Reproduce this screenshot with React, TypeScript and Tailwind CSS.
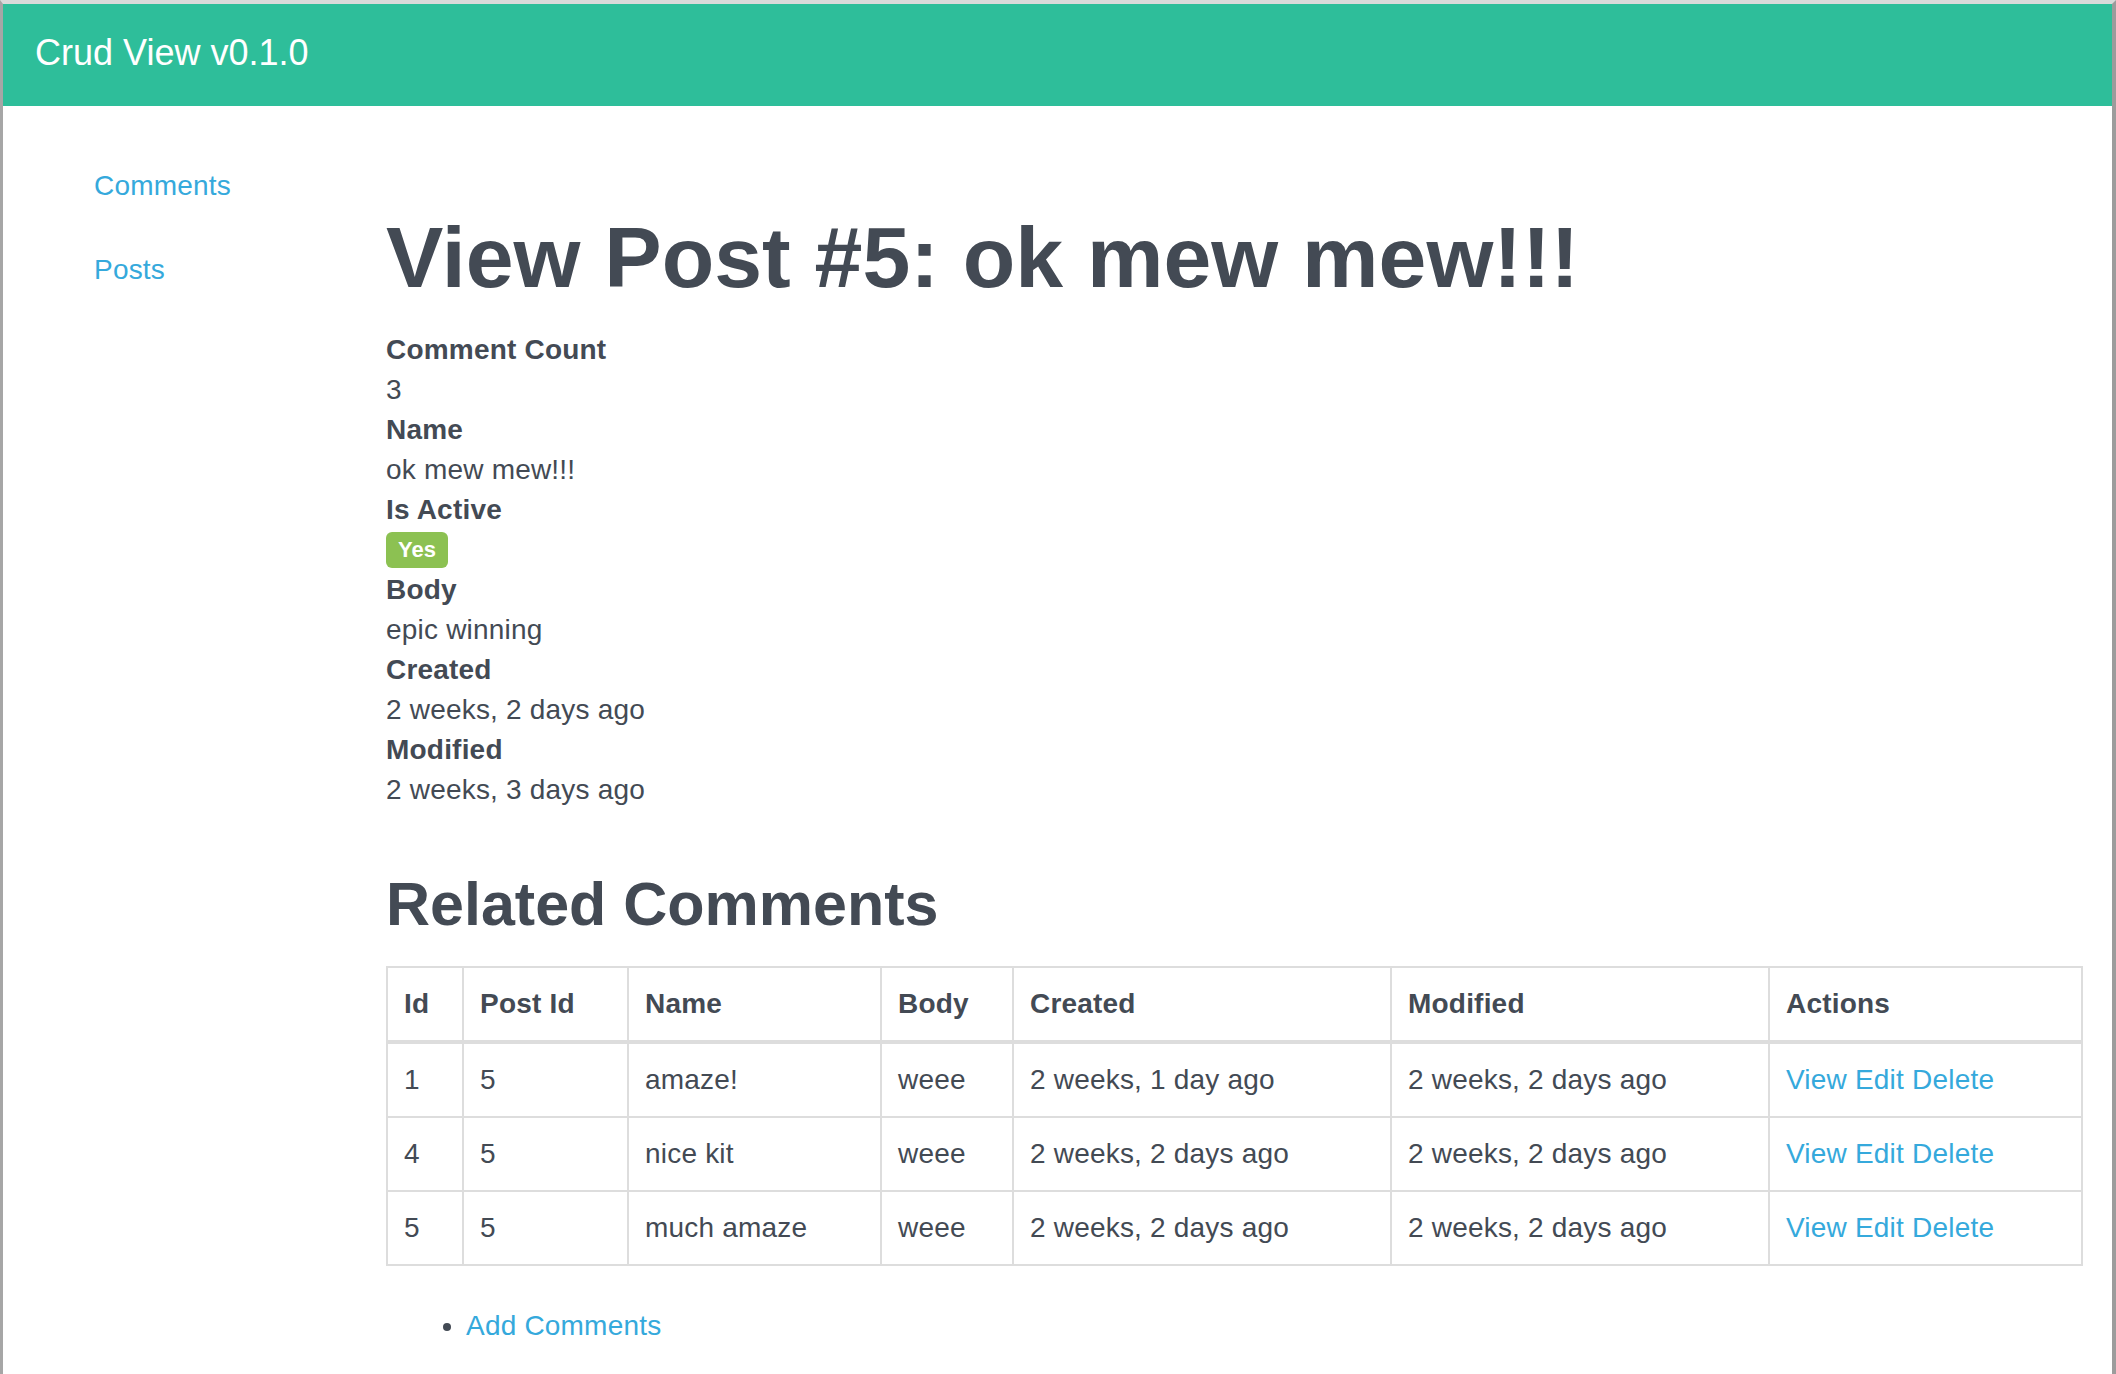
type Comment = {
  id: number;
  postId: number;
  name: string;
  body: string;
  created: string;
  modified: string;
};

const comments: Comment[] = [
  { id: 1, postId: 5, name: "amaze!", body: "weee", created: "2 weeks, 1 day ago", modified: "2 weeks, 2 days ago" },
  { id: 4, postId: 5, name: "nice kit", body: "weee", created: "2 weeks, 2 days ago", modified: "2 weeks, 2 days ago" },
  { id: 5, postId: 5, name: "much amaze", body: "weee", created: "2 weeks, 2 days ago", modified: "2 weeks, 2 days ago" },
];

const columns = ["Id", "Post Id", "Name", "Body", "Created", "Modified", "Actions"];

const Field = ({ label, children }: { label: string; children: React.ReactNode }) => (
  <>
    <dt className="font-bold leading-[40px]">{label}</dt>
    <dd className="leading-[40px]">{children}</dd>
  </>
);

const App = () => {
  return (
    <div
      className="h-[1374px] overflow-hidden bg-white border-l-[3px] border-r-[4px] border-t-[4px] border-l-[#a6a6a6] border-r-[#9c9c9c] border-t-[#dadada] text-[#434a54] text-[28px] tracking-[0.2px]"
      style={{ fontFamily: '"Liberation Sans", Arial, Helvetica, sans-serif' }}
    >
      <header className="h-[102px] bg-[#2ebe9a] flex items-center pl-[32px] pb-[5px]">
        <span className="text-white text-[36px] leading-none tracking-normal">Crud View v0.1.0</span>
      </header>

      <div className="flex">
        <nav className="w-[383px] shrink-0 pl-[61px] pt-[40px]">
          <ul className="flex flex-col gap-[4px]">
            <li>
              <a href="#" className="inline-block px-[30px] py-[20px] leading-[40px] text-[#35a9dc]">
                Comments
              </a>
            </li>
            <li>
              <a href="#" className="inline-block px-[30px] py-[20px] leading-[40px] text-[#35a9dc]">
                Posts
              </a>
            </li>
          </ul>
        </nav>

        <main className="flex-1 pr-[31px] pt-[108px]">
          <h1 className="text-[86px] font-bold leading-none tracking-normal mb-[30px]">View Post #5: ok mew mew!!!</h1>

          <dl>
            <Field label="Comment Count">3</Field>
            <Field label="Name">ok mew mew!!!</Field>
            <dt className="font-bold leading-[40px]">Is Active</dt>
            <dd className="h-[40px] flex items-center">
              <span className="inline-flex h-[36px] items-center px-[12px] rounded-[6px] bg-[#8cc152] text-white text-[22px] font-bold leading-none tracking-normal">
                Yes
              </span>
            </dd>
            <Field label="Body">epic winning</Field>
            <Field label="Created">2 weeks, 2 days ago</Field>
            <Field label="Modified">2 weeks, 3 days ago</Field>
          </dl>

          <h2 className="text-[61px] font-bold leading-none tracking-normal mt-[64px] mb-[31px]">Related Comments</h2>

          <table className="w-[1695px] table-fixed border-collapse border-2 border-[#dddddd]">
            <colgroup>
              <col className="w-[76px]" />
              <col className="w-[165px]" />
              <col className="w-[253px]" />
              <col className="w-[132px]" />
              <col className="w-[378px]" />
              <col className="w-[378px]" />
              <col className="w-[313px]" />
            </colgroup>
            <thead>
              <tr>
                {columns.map((c) => (
                  <th
                    key={c}
                    className="border-2 border-b-4 border-[#dddddd] px-[16px] py-[16px] text-left font-bold leading-[40px]"
                  >
                    {c}
                  </th>
                ))}
              </tr>
            </thead>
            <tbody>
              {comments.map((row) => (
                <tr key={row.id}>
                  <td className="border-2 border-[#dddddd] px-[16px] py-[16px] leading-[40px]">{row.id}</td>
                  <td className="border-2 border-[#dddddd] px-[16px] py-[16px] leading-[40px]">{row.postId}</td>
                  <td className="border-2 border-[#dddddd] px-[16px] py-[16px] leading-[40px]">{row.name}</td>
                  <td className="border-2 border-[#dddddd] px-[16px] py-[16px] leading-[40px]">{row.body}</td>
                  <td className="border-2 border-[#dddddd] px-[16px] py-[16px] leading-[40px]">{row.created}</td>
                  <td className="border-2 border-[#dddddd] px-[16px] py-[16px] leading-[40px]">{row.modified}</td>
                  <td className="border-2 border-[#dddddd] px-[16px] py-[16px] leading-[40px]">
                    <a href="#" className="text-[#35a9dc]">View</a>{" "}
                    <a href="#" className="text-[#35a9dc]">Edit</a>{" "}
                    <a href="#" className="text-[#35a9dc]">Delete</a>
                  </td>
                </tr>
              ))}
            </tbody>
          </table>

          <ul className="list-disc pl-[80px] mt-[40px]">
            <li className="leading-[40px]">
              <a href="#" className="text-[#35a9dc]">Add Comments</a>
            </li>
          </ul>
        </main>
      </div>
    </div>
  );
};

export default App;
